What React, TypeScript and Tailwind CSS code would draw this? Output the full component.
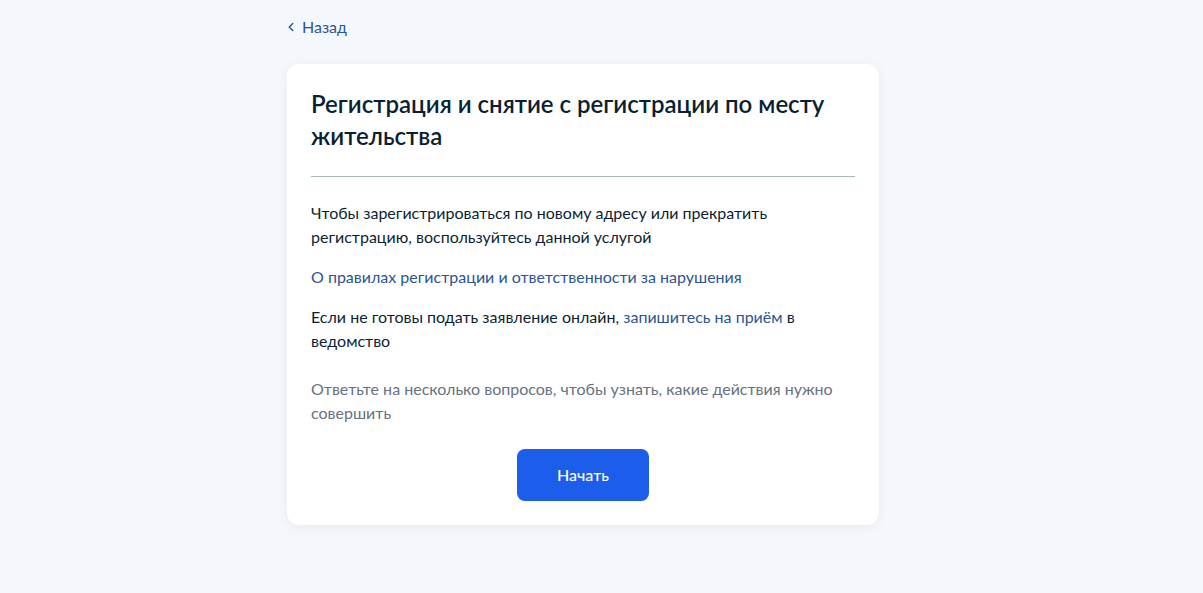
import { ChevronLeft } from "lucide-react";

const font = { fontFamily: "Lato, 'Noto Sans', sans-serif" };

export default function App() {
  return (
    <div className="min-h-[593px] bg-[#f4f7fb] pl-[287px] pt-[15px] pb-[69px] text-[#0b1f33]" style={font}>
      <a href="#" className="flex h-[24px] items-center gap-[4px] text-[16px] text-[#2b5597]">
        <ChevronLeft size={14} strokeWidth={2.5} className="-ml-[3px]" />
        <span>Назад</span>
      </a>

      <div className="mt-[25px] w-[592px] rounded-[12px] bg-white px-[24px] py-[24px] shadow-[0_2px_12px_rgba(11,31,51,0.06)]">
        <h1 className="text-[24px] leading-[32px] font-semibold">
          Регистрация и снятие с регистрации по месту жительства
        </h1>
        <div className="mt-[24px] h-px bg-[#a9b9b6]" />

        <div className="mt-[24px] flex flex-col text-[16px] leading-[24px]">
          <p>
            Чтобы зарегистрироваться по новому адресу или прекратить
            регистрацию, воспользуйтесь данной услугой
          </p>
          <a href="#" className="mt-[16px] text-[#2b5597]">
            О правилах регистрации и ответственности за нарушения
          </a>
          <p className="mt-[16px]">
            Если не готовы подать заявление онлайн,{" "}
            <a href="#" className="text-[#2b5597]">запишитесь на приём</a> в
            ведомство
          </p>
          <p className="mt-[24px] text-[#66727f]">
            Ответьте на несколько вопросов, чтобы узнать, какие действия нужно
            совершить
          </p>
        </div>

        <div className="mt-[24px] flex justify-center">
          <button className="h-[52px] w-[132px] rounded-[8px] bg-[#1d5deb] text-[16px] font-medium text-white">
            Начать
          </button>
        </div>
      </div>
    </div>
  );
}
